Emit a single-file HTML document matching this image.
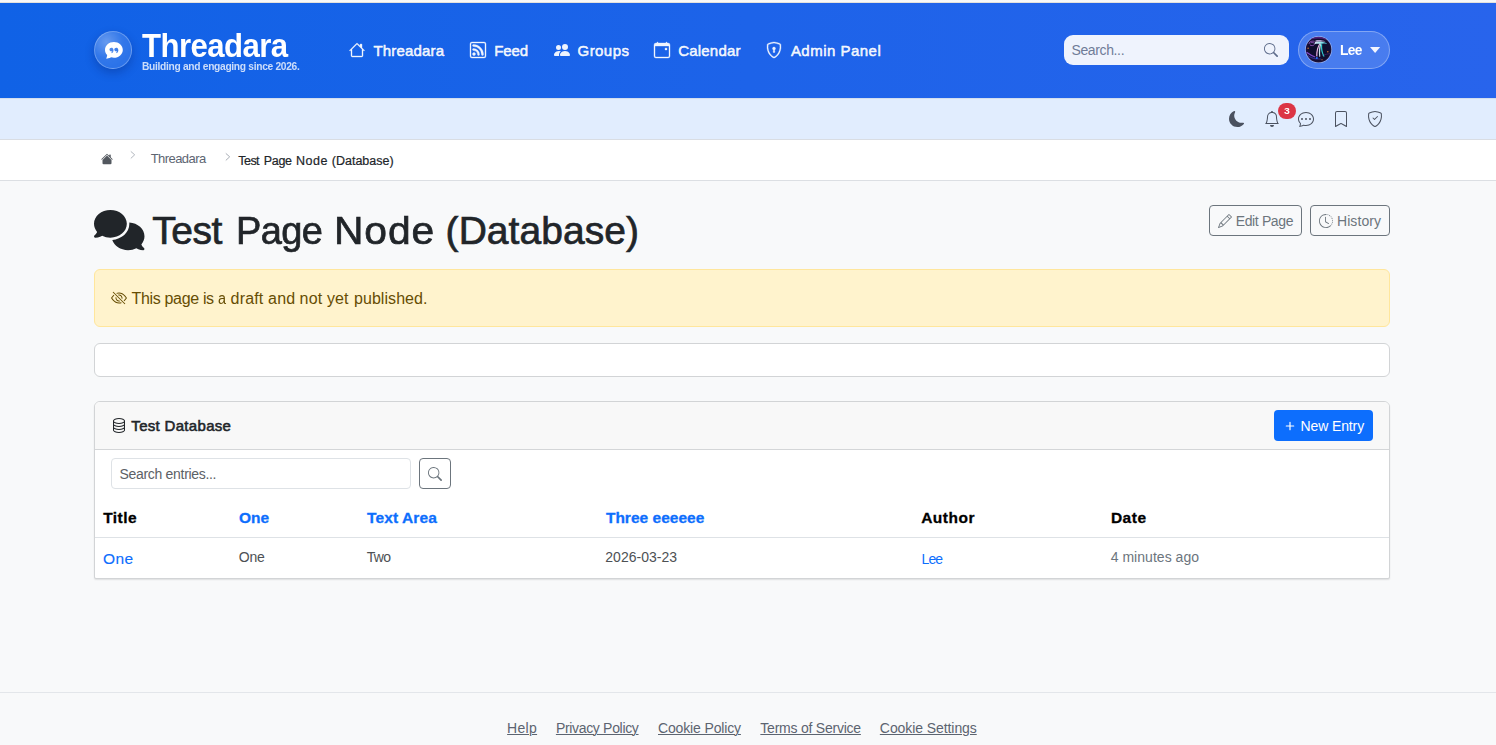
<!DOCTYPE html>
<html lang="en"><head><meta charset="utf-8"><title>Test Page Node (Database) - Threadara</title>
<style>
*{box-sizing:border-box;margin:0;padding:0}
html,body{width:1496px;height:745px;overflow:hidden}
body{position:relative;background:#f8f9fa;font-family:"Liberation Sans",sans-serif;color:#212529}
.a{position:absolute}
.t{position:absolute;white-space:pre;line-height:1;transform-origin:0 0}
.i{position:absolute;display:block;overflow:visible}
.ul{position:absolute;height:1px}
a.t{text-decoration:none}
</style></head>
<body>
<header aria-label="Site header">
<div class="a" style="left:0;top:0;width:1496px;height:3px;background:linear-gradient(180deg,#f7f7f7 0,#f9f9f9 2px,#e4e1dc 2px,#e4e1dc 3px)"></div>
<div class="a" style="left:0;top:3px;width:1496px;height:95px;background:linear-gradient(90deg,#1062e6 0%,#1d63e9 50%,#2864ec 100%)"></div>
<div class="a" style="left:94px;top:31px;width:38px;height:38px;border-radius:50%;border:1px solid rgba(255,255,255,.28);background:radial-gradient(circle at 32% 28%,rgba(255,255,255,.36) 0%,rgba(255,255,255,.14) 45%,rgba(255,255,255,.08) 100%);box-shadow:0 4px 10px rgba(0,20,90,.28)"></div>
<svg class="i" style="left:104.6px;top:41.3px;" width="17.8" height="17.8" viewBox="0 0 16 16" fill="#fff"><path d="M16 8c0 3.866-3.582 7-8 7a9 9 0 0 1-2.347-.306c-.584.296-1.925.864-4.181 1.234-.2.032-.352-.176-.273-.362.354-.836.674-1.950.77-2.966C.744 11.370 0 9.760 0 8c0-3.866 3.582-7 8-7s8 3.134 8 7M7.194 6.766a1.700 1.700 0 0 0-.227-.272 1.500 1.500 0 0 0-.469-.324l-.008-.004A1.800 1.800 0 0 0 5.734 6C4.776 6 4 6.746 4 7.667c0 .92.776 1.666 1.734 1.666.343 0 .662-.095.931-.26-.137.389-.39.804-.81 1.220a.405.405 0 0 0 .011.59c.173.16.447.155.614-.01 1.334-1.329 1.370-2.758.941-3.706a2.500 2.500 0 0 0-.227-.4zM11 9.073c-.136.389-.39.804-.81 1.220a.405.405 0 0 0 .012.59c.172.16.446.155.613-.01 1.334-1.329 1.370-2.758.942-3.706a2.500 2.500 0 0 0-.228-.4 1.700 1.700 0 0 0-.227-.273 1.500 1.500 0 0 0-.469-.324l-.008-.004A1.800 1.800 0 0 0 10.070 6c-.957 0-1.734.746-1.734 1.667 0 .92.777 1.666 1.734 1.666.343 0 .662-.095.931-.26z"/></svg>
<svg stroke="rgba(255,255,255,.93)" stroke-width=".35" class="i" style="left:349px;top:41.7px;" width="16" height="16" viewBox="0 0 16 16" fill="rgba(255,255,255,.93)"><path d="M8.707 1.5a1 1 0 0 0-1.414 0L.646 8.146a.5.5 0 0 0 .708.708L2 8.207V13.5A1.5 1.5 0 0 0 3.5 15h9a1.5 1.5 0 0 0 1.5-1.5V8.207l.646.647a.5.5 0 0 0 .708-.708L13 5.793V2.5a.5.5 0 0 0-.5-.5h-1a.5.5 0 0 0-.5.5v1.293zM13 7.207V13.5a.5.5 0 0 1-.5.5h-9a.5.5 0 0 1-.5-.5V7.207l5-5z"/></svg>
<svg stroke="rgba(255,255,255,.93)" stroke-width=".35" class="i" style="left:470px;top:42px;" width="16" height="16" viewBox="0 0 16 16" fill="rgba(255,255,255,.93)"><path d="M14 1a1 1 0 0 1 1 1v12a1 1 0 0 1-1 1H2a1 1 0 0 1-1-1V2a1 1 0 0 1 1-1zM2 0a2 2 0 0 0-2 2v12a2 2 0 0 0 2 2h12a2 2 0 0 0 2-2V2a2 2 0 0 0-2-2z"/><path d="M5.5 12a1.5 1.5 0 1 1-3 0 1.5 1.5 0 0 1 3 0m-3-8.5a1 1 0 0 1 1-1c5.523 0 10 4.477 10 10a1 1 0 1 1-2 0 8 8 0 0 0-8-8 1 1 0 0 1-1-1m0 4a1 1 0 0 1 1-1 6 6 0 0 1 6 6 1 1 0 1 1-2 0 4 4 0 0 0-4-4 1 1 0 0 1-1-1"/></svg>
<svg class="i" style="left:553.5px;top:42px;" width="16" height="16" viewBox="0 0 16 16" fill="rgba(255,255,255,.93)"><path d="M7 14s-1 0-1-1 1-4 5-4 5 3 5 4-1 1-1 1zm4-6a3 3 0 1 0 0-6 3 3 0 0 0 0 6m-5.784 6A2.24 2.24 0 0 1 5 13c0-1.355.68-2.75 1.936-3.72A6.300 6.300 0 0 0 5 9c-4 0-5 3-5 4s1 1 1 1zM4.5 8a2.5 2.5 0 1 0 0-5 2.5 2.5 0 0 0 0 5"/></svg>
<svg stroke="rgba(255,255,255,.93)" stroke-width=".35" class="i" style="left:654px;top:42px;" width="16" height="16" viewBox="0 0 16 16" fill="rgba(255,255,255,.93)"><path d="M11 6.5a.5.5 0 0 1 .5-.5h1a.5.5 0 0 1 .5.5v1a.5.5 0 0 1-.5.5h-1a.5.5 0 0 1-.5-.5z"/><path d="M3.5 0a.5.5 0 0 1 .5.5V1h8V.5a.5.5 0 0 1 1 0V1h1a2 2 0 0 1 2 2v11a2 2 0 0 1-2 2H2a2 2 0 0 1-2-2V3a2 2 0 0 1 2-2h1V.5a.5.5 0 0 1 .5-.5M1 4v10a1 1 0 0 0 1 1h12a1 1 0 0 0 1-1V4z"/></svg>
<svg stroke="rgba(255,255,255,.93)" stroke-width=".35" class="i" style="left:766.4px;top:42px;" width="16" height="16" viewBox="0 0 16 16" fill="rgba(255,255,255,.93)"><path d="M5.338 1.59a61 61 0 0 0-2.837.856.48.48 0 0 0-.328.39c-.554 4.157.726 7.190 2.253 9.188a10.700 10.700 0 0 0 2.287 2.233c.346.244.652.42.893.533q.18.085.293.118a1 1 0 0 0 .101.025 1 1 0 0 0 .1-.025q.114-.034.294-.118c.24-.113.547-.29.893-.533a10.700 10.700 0 0 0 2.287-2.233c1.527-1.997 2.807-5.031 2.253-9.188a.48.48 0 0 0-.328-.39c-.651-.213-1.750-.56-2.837-.855C9.552 1.29 8.531 1.067 8 1.067c-.53 0-1.552.223-2.662.524zM5.072.56C6.157.265 7.310 0 8 0s1.843.265 2.928.56c1.110.3 2.229.655 2.887.87a1.540 1.540 0 0 1 1.044 1.262c.596 4.477-.787 7.795-2.465 9.990a11.800 11.800 0 0 1-2.517 2.453 7 7 0 0 1-1.048.625c-.28.132-.581.24-.829.24s-.548-.108-.829-.24a7 7 0 0 1-1.048-.625 11.800 11.800 0 0 1-2.517-2.453C1.928 10.487.545 7.169 1.141 2.692A1.540 1.540 0 0 1 2.185 1.430 63 63 0 0 1 5.072.56"/><path d="M9.5 6.5a1.5 1.5 0 0 1-1 1.415l.385 1.990a.5.5 0 0 1-.491.595h-.788a.5.5 0 0 1-.49-.595l.384-1.990a1.500 1.500 0 1 1 2-1.415"/></svg>
<div class="a" style="left:1064px;top:35px;width:225px;height:30px;border-radius:9px;background:#eff3fd"></div>
<svg class="i" style="left:1264px;top:43px;" width="14" height="14" viewBox="0 0 16 16" fill="#5f6d8c"><path d="M11.742 10.344a6.500 6.500 0 1 0-1.397 1.398h-.001q.044.06.098.115l3.850 3.850a1 1 0 0 0 1.415-1.414l-3.850-3.850a1 1 0 0 0-.115-.1zM12 6.500a5.500 5.500 0 1 1-11 0 5.500 5.500 0 0 1 11 0"/></svg>
<div class="a" style="left:1298px;top:31px;width:92px;height:38px;border-radius:19px;background:rgba(255,255,255,.16);border:1px solid rgba(255,255,255,.32)"></div>
<svg class="i" style="left:1305.400px;top:36.4px" width="27.2" height="27.2" viewBox="0 0 27.2 27.2">
<defs><radialGradient id="ag" cx="52%" cy="50%" r="55%"><stop offset="0" stop-color="#0c0e2a"/><stop offset=".75" stop-color="#110d30"/><stop offset="1" stop-color="#23103f"/></radialGradient>
<linearGradient id="tg" x1="0" y1="0" x2="1" y2=".3"><stop offset="0" stop-color="#e9dcf6"/><stop offset=".5" stop-color="#a9e6ee"/><stop offset="1" stop-color="#48c8d8"/></linearGradient>
<filter id="b1" x="-40%" y="-40%" width="180%" height="180%"><feGaussianBlur stdDeviation=".6"/></filter>
<filter id="b2" x="-40%" y="-40%" width="180%" height="180%"><feGaussianBlur stdDeviation=".32"/></filter>
<clipPath id="ac"><circle cx="13.600" cy="13.600" r="12.800"/></clipPath></defs>
<circle cx="13.600" cy="13.600" r="13.500" fill="#a9c2f8" opacity=".8"/>
<circle cx="13.600" cy="13.600" r="12.800" fill="url(#ag)"/>
<g clip-path="url(#ac)">
<path d="M6 2.600C10 1.200 17 1.200 21 3" stroke="#5e2388" stroke-width="1.600" fill="none" opacity=".85" filter="url(#b1)"/>
<path d="M1.500 16.200C4 18 7 19.800 10.200 21" stroke="#9050dc" stroke-width="1.200" fill="none" opacity=".9" filter="url(#b1)"/>
<path d="M2.500 19.500C6 22 11 23.300 16 23" stroke="#3c3aa8" stroke-width="1.100" fill="none" opacity=".7" filter="url(#b1)"/>
<path d="M17 19.500C20 18.500 22.500 18 25.500 17.500" stroke="#6a3590" stroke-width=".8" fill="none" opacity=".6" filter="url(#b1)"/>
<path d="M4.300 8C3.700 6 6.500 4.700 9.600 5.300M4.900 8.900C6.500 10.100 8.600 9.700 9.600 8.400M5.600 6.900C7 6.300 8.500 6.600 9.400 7.300" stroke="#b868de" stroke-width=".8" fill="none" opacity=".95" filter="url(#b2)"/>
<path d="M10.500 4.400C13.500 3.700 17.500 4 20.500 5.600L17 5.500C14.500 5.300 12.500 5.400 10.300 5.700Z" fill="#cdb6ea" opacity=".85" filter="url(#b2)"/>
<path d="M10.200 5.900C13.500 5 18 5.300 21.800 7.200C21.900 7.600 21.500 7.800 21 7.700C18.600 7.400 16.500 7.600 15 8.100C13 7.600 11.200 7.700 9.800 8.200C9.500 7.300 9.600 6.500 10.200 5.900Z" fill="url(#tg)" filter="url(#b2)"/>
<path d="M14.200 7.800C12.500 10.800 11 15 11.200 20.200L12.400 20.600C12.200 16 13.200 11.500 15.200 8Z" fill="#eeb4e4" filter="url(#b2)"/>
<path d="M15 8.100C13.800 12 13.600 16.500 14.300 20.900L15.300 20.500C14.900 16.200 15.300 11.700 16.200 8.300Z" fill="#cfeff4" opacity=".95" filter="url(#b2)"/>
<path d="M16 8.300C15.400 12.600 16.500 17.500 18.800 20.900L19.500 20.200C17.600 16.900 16.900 12.600 17.200 8.300Z" fill="#2ec6cc" filter="url(#b2)"/>
<circle cx="3.100" cy="12.300" r=".7" fill="#f0903c" opacity=".9" filter="url(#b2)"/><circle cx="22.800" cy="15.800" r=".75" fill="#e8843c" opacity=".9" filter="url(#b2)"/><circle cx="17" cy="23.700" r=".6" fill="#d88840" opacity=".85" filter="url(#b2)"/>
<circle cx="11.800" cy="22" r="1" fill="#2a6cff" filter="url(#b1)"/>
</g></svg>
<svg class="i" style="left:1370.3px;top:47.2px" width="10.2" height="6" viewBox="0 0 10.2 6"><path d="M0 0h10.200L5.100 6z" fill="#f4f6ff"/></svg>
<span class="t" style="left:141.97px;top:29px;font-size:33.5px;color:#fff;font-weight:700;letter-spacing:-0.613px;transform:scaleX(0.9300);">Threadara</span>
<span class="t" style="left:141.73px;top:61px;font-size:11.0px;color:rgba(255,255,255,.78);font-weight:700;letter-spacing:-0.333px;transform:scaleX(0.9300);">Building and engaging since 2026.</span>
<a class="t" href="#" style="left:373.52px;top:43px;font-size:15.0px;color:rgba(255,255,255,.92);letter-spacing:0.169px;-webkit-text-stroke:0.55px rgba(255,255,255,.92);">Threadara</a>
<a class="t" href="#" style="left:494.27px;top:43px;font-size:15.0px;color:rgba(255,255,255,.92);letter-spacing:-0.100px;-webkit-text-stroke:0.55px rgba(255,255,255,.92);">Feed</a>
<a class="t" href="#" style="left:577.62px;top:43px;font-size:15.0px;color:rgba(255,255,255,.92);letter-spacing:0.420px;-webkit-text-stroke:0.55px rgba(255,255,255,.92);">Groups</a>
<a class="t" href="#" style="left:678.27px;top:43px;font-size:15.0px;color:rgba(255,255,255,.92);letter-spacing:0.186px;-webkit-text-stroke:0.55px rgba(255,255,255,.92);">Calendar</a>
<a class="t" href="#" style="left:790.88px;top:43px;font-size:15.0px;color:rgba(255,255,255,.92);letter-spacing:0.485px;-webkit-text-stroke:0.55px rgba(255,255,255,.92);">Admin Panel</a>
<span class="t" style="left:1071.50px;top:43px;font-size:14.0px;color:#6f7c98;letter-spacing:-0.375px;">Search...</span>
<a class="t" href="#" style="left:1339.69px;top:43px;font-size:14.5px;color:#fff;font-weight:700;letter-spacing:-0.717px;transform:scaleX(0.9500);">Lee</a>
</header>
<section aria-label="User toolbar">
<div class="a" style="left:0;top:98px;width:1496px;height:41px;background:#e1edfe"></div>
<div class="a" style="left:0;top:98px;width:1496px;height:1px;background:#d3deee"></div>
<div class="a" style="left:0;top:139px;width:1496px;height:1px;background:#d9dde3"></div>
<svg class="i" style="left:1229px;top:111px;" width="16" height="16" viewBox="0 0 16 16" fill="#4b5260"><path d="M6 .278a.77.77 0 0 1 .08.858 7.200 7.200 0 0 0-.878 3.460c0 4.021 3.278 7.277 7.318 7.277q.792-.001 1.533-.16a.79.79 0 0 1 .81.316.73.73 0 0 1-.031.893A8.350 8.350 0 0 1 8.344 16C3.734 16 0 12.286 0 7.710 0 4.266 2.114 1.312 5.124.06A.75.75 0 0 1 6 .278"/></svg>
<svg class="i" style="left:1263.5px;top:111px;" width="16" height="16" viewBox="0 0 16 16" fill="#4b5260"><path d="M8 16a2 2 0 0 0 2-2H6a2 2 0 0 0 2 2M8 1.918l-.797.161A4 4 0 0 0 4 6c0 .628-.134 2.197-.459 3.742-.16.767-.376 1.566-.663 2.258h10.244c-.287-.692-.502-1.490-.663-2.258C12.134 8.197 12 6.628 12 6a4 4 0 0 0-3.203-3.920zM14.220 12c.223.447.481.801.78 1H1c.299-.199.557-.553.78-1C2.680 10.200 3 6.880 3 6c0-2.420 1.720-4.440 4.005-4.901a1 1 0 1 1 1.990 0A5 5 0 0 1 13 6c0 .880.320 4.200 1.220 6"/></svg>
<svg class="i" style="left:1298px;top:111px;" width="16" height="16" viewBox="0 0 16 16" fill="#4b5260"><path d="M5 8a1 1 0 1 1-2 0 1 1 0 0 1 2 0m4 0a1 1 0 1 1-2 0 1 1 0 0 1 2 0m3 1a1 1 0 1 0 0-2 1 1 0 0 0 0 2"/><path d="m2.165 15.803.02-.004c1.830-.363 2.948-.842 3.468-1.105A9 9 0 0 0 8 15c4.418 0 8-3.134 8-7s-3.582-7-8-7-8 3.134-8 7c0 1.760.743 3.370 1.970 4.600a10.400 10.400 0 0 1-.524 2.318l-.003.011a11 11 0 0 1-.244.637c-.079.186.074.394.273.362a22 22 0 0 0 .693-.125m.8-3.108a1 1 0 0 0-.287-.801C1.618 10.830 1 9.468 1 8c0-3.192 3.004-6 7-6s7 2.808 7 6-3.004 6-7 6a8 8 0 0 1-2.088-.272 1 1 0 0 0-.711.074c-.387.196-1.240.57-2.634.893a11 11 0 0 0 .398-2"/></svg>
<svg class="i" style="left:1332.5px;top:111px;" width="16" height="16" viewBox="0 0 16 16" fill="#4b5260"><path d="M2 2a2 2 0 0 1 2-2h8a2 2 0 0 1 2 2v13.500a.5.5 0 0 1-.777.416L8 13.101l-5.223 2.815A.5.5 0 0 1 2 15.500zm2-1a1 1 0 0 0-1 1v12.566l4.723-2.482a.5.5 0 0 1 .554 0L13 14.566V2a1 1 0 0 0-1-1z"/></svg>
<svg class="i" style="left:1367px;top:111px;" width="16" height="16" viewBox="0 0 16 16" fill="#4b5260"><path d="M5.338 1.59a61 61 0 0 0-2.837.856.48.48 0 0 0-.328.39c-.554 4.157.726 7.190 2.253 9.188a10.700 10.700 0 0 0 2.287 2.233c.346.244.652.42.893.533q.18.085.293.118a1 1 0 0 0 .101.025 1 1 0 0 0 .1-.025q.114-.034.294-.118c.24-.113.547-.29.893-.533a10.700 10.700 0 0 0 2.287-2.233c1.527-1.997 2.807-5.031 2.253-9.188a.48.48 0 0 0-.328-.39c-.651-.213-1.750-.56-2.837-.855C9.552 1.29 8.531 1.067 8 1.067c-.53 0-1.552.223-2.662.524zM5.072.56C6.157.265 7.310 0 8 0s1.843.265 2.928.56c1.110.3 2.229.655 2.887.87a1.540 1.540 0 0 1 1.044 1.262c.596 4.477-.787 7.795-2.465 9.990a11.800 11.800 0 0 1-2.517 2.453 7 7 0 0 1-1.048.625c-.28.132-.581.24-.829.24s-.548-.108-.829-.24a7 7 0 0 1-1.048-.625 11.800 11.800 0 0 1-2.517-2.453C1.928 10.487.545 7.169 1.141 2.692A1.540 1.540 0 0 1 2.185 1.430 63 63 0 0 1 5.072.56"/><path d="M10.854 5.146a.5.5 0 0 1 0 .708l-3 3a.5.5 0 0 1-.708 0l-1.500-1.500a.5.5 0 1 1 .708-.708L7.500 7.793l2.646-2.647a.5.5 0 0 1 .708 0"/></svg>
<div class="a" style="left:1278.3px;top:102.6px;width:17.6px;height:16.6px;border-radius:9px;background:#dc3545"></div>
<span class="t" style="left:1283.54px;top:106px;font-size:9.5px;color:#fff;font-weight:700;transform:scaleX(1.1000);">3</span>
</section>
<nav aria-label="Breadcrumb">
<div class="a" style="left:0;top:140px;width:1496px;height:40px;background:#fff"></div>
<div class="a" style="left:0;top:180px;width:1496px;height:1px;background:#dcdfe3"></div>
<svg class="i" style="left:101.0px;top:152.5px;" width="12" height="12" viewBox="0 0 16 16" fill="#53585f"><path d="M8.707 1.5a1 1 0 0 0-1.414 0L.646 8.146a.5.5 0 0 0 .708.708L8 2.207l6.646 6.647a.5.5 0 0 0 .708-.708L13 5.793V2.5a.5.5 0 0 0-.5-.5h-1a.5.5 0 0 0-.5.5v1.293z"/><path d="m8 3.293 6 6V13.5a1.5 1.5 0 0 1-1.5 1.500h-9A1.500 1.500 0 0 1 2 13.500V9.293z"/></svg>
<svg class="i" style="left:130px;top:150.6px" width="6" height="8" viewBox="0 0 6 8"><path d="M0.800 0.400L4.700 3.800L0.800 7.400" fill="none" stroke="#b3b8bf" stroke-width="1"/></svg>
<svg class="i" style="left:224.800px;top:152.7px" width="6" height="8" viewBox="0 0 6 8"><path d="M0.800 0.400L4.700 3.800L0.800 7.400" fill="none" stroke="#a9aeb6" stroke-width="1"/></svg>
<a class="t" href="#" style="left:150.65px;top:152px;font-size:13.0px;color:#5d6572;letter-spacing:-0.550px;">Threadara</a>
<span class="t" style="left:238.35px;top:155px;font-size:12.5px;color:#212529;letter-spacing:-0.567px;-webkit-text-stroke:0.2px #212529;">Test</span>
<span class="t" style="left:263.85px;top:155px;font-size:12.5px;color:#212529;letter-spacing:-0.367px;-webkit-text-stroke:0.2px #212529;">Page</span>
<span class="t" style="left:296.00px;top:155px;font-size:12.5px;color:#212529;letter-spacing:0.550px;-webkit-text-stroke:0.2px #212529;">Node</span>
<span class="t" style="left:331.85px;top:155px;font-size:12.5px;color:#212529;letter-spacing:-0.011px;-webkit-text-stroke:0.2px #212529;">(Database)</span>
</nav>
<main aria-label="Page content">
<svg class="i" style="left:94px;top:210px" width="50.5" height="40.2" viewBox="0 0 640 512" preserveAspectRatio="none" fill="#212529"><path d="M208 352c114.900 0 208-78.800 208-176S322.900 0 208 0S0 78.800 0 176c0 38.600 14.700 74.300 39.600 103.400c-3.500 9.400-8.700 17.700-14.200 24.700c-4.800 6.200-9.700 11-13.300 14.300c-1.800 1.600-3.300 2.900-4.300 3.700c-.5 .4-.9 .7-1.100 .8l-.2 .2 0 0 0 0C1 327.200-1.400 334.400 .8 340.900S9.100 352 16 352c21.800 0 43.800-5.600 62.100-12.500c9.200-3.500 17.800-7.400 25.300-11.400C134.100 343.300 169.800 352 208 352zM448 176c0 112.300-99.100 196.900-216.500 207C255.800 457.400 336.400 512 432 512c38.200 0 73.900-8.700 104.700-23.900c7.500 4 16 7.900 25.200 11.400c18.300 6.900 40.300 12.500 62.100 12.500c6.900 0 13.100-4.500 15.200-11.100c2.100-6.600-.2-13.800-5.800-17.900l0 0 0 0-.2-.2c-.2-.2-.6-.4-1.100-.8c-1-.8-2.500-2-4.300-3.700c-3.600-3.300-8.500-8.100-13.300-14.300c-5.500-7-10.700-15.400-14.200-24.700c24.900-29 39.600-64.700 39.600-103.400c0-92.800-84.900-168.900-192.600-175.500c.4 5.100 .6 10.300 .6 15.500z"/></svg>
<div class="a" style="left:1209px;top:205px;width:93px;height:31px;border:1px solid #6c757d;border-radius:4px"></div>
<div class="a" style="left:1310px;top:205px;width:80px;height:31px;border:1px solid #6c757d;border-radius:4px"></div>
<svg class="i" style="left:1218px;top:214px;" width="14" height="14" viewBox="0 0 16 16" fill="#6c757d"><path d="M12.146.146a.5.5 0 0 1 .708 0l3 3a.5.5 0 0 1 0 .708l-10 10a.5.5 0 0 1-.168.110l-5 2a.5.5 0 0 1-.65-.65l2-5a.5.5 0 0 1 .11-.168zM11.207 2.500 13.500 4.793 14.793 3.500 12.500 1.207zm1.586 3L10.500 3.207 4 9.707V10h.5a.5.5 0 0 1 .5.5v.5h.5a.5.5 0 0 1 .5.5v.5h.293zm-9.761 5.175-.106.106-1.528 3.821 3.821-1.528.106-.106A.5.5 0 0 1 5 12.500V12h-.5a.5.5 0 0 1-.5-.5V11h-.5a.5.5 0 0 1-.468-.325"/></svg>
<svg class="i" style="left:1319px;top:214px;" width="14" height="14" viewBox="0 0 16 16" fill="#6c757d"><path d="M8.515 1.019A7 7 0 0 0 8 1V0a8 8 0 0 1 .589.022zm2.004.45a7 7 0 0 0-.985-.299l.219-.976q.576.129 1.126.342zm1.370.71a7 7 0 0 0-.439-.27l.493-.87a8 8 0 0 1 .979.654l-.615.789a7 7 0 0 0-.418-.302zm1.834 1.790a7 7 0 0 0-.653-.796l.724-.69q.406.429.747.910zm.744 1.352a7 7 0 0 0-.214-.468l.893-.45a8 8 0 0 1 .45 1.088l-.95.313a7 7 0 0 0-.179-.483m.53 2.507a7 7 0 0 0-.1-1.025l.985-.17q.1.58.116 1.170zm-.131 1.538q.05-.254.081-.51l.993.123a8 8 0 0 1-.23 1.155l-.964-.267q.069-.247.12-.501m-.952 2.379q.276-.436.486-.908l.914.405q-.24.54-.555 1.038zm-.964 1.205q.183-.183.35-.378l.758.653a8 8 0 0 1-.401.432z"/><path d="M8 1a7 7 0 1 0 4.950 11.950l.707.707A8.001 8.001 0 1 1 8 0z"/><path d="M7.500 3a.5.5 0 0 1 .5.5v5.210l3.248 1.856a.5.5 0 0 1-.496.868l-3.500-2A.5.5 0 0 1 7 9V3.500a.5.5 0 0 1 .5-.5"/></svg>
<div class="a" style="left:94px;top:269px;width:1296px;height:58px;background:#fff3cd;border:1px solid #ffe69c;border-radius:6px"></div>
<svg class="i" style="left:111px;top:290px;" width="16" height="16" viewBox="0 0 16 16" fill="#664d03"><path d="M13.359 11.238C15.060 9.720 16 8 16 8s-3-5.500-8-5.500a7 7 0 0 0-2.790.588l.77.771A6 6 0 0 1 8 3.500c2.120 0 3.879 1.168 5.168 2.457A13 13 0 0 1 14.828 8q-.086.130-.195.288c-.335.48-.83 1.120-1.465 1.755q-.247.248-.517.486z"/><path d="M11.297 9.176a3.500 3.500 0 0 0-4.474-4.474l.823.823a2.500 2.500 0 0 1 2.829 2.829zm-2.943 1.299.822.822a3.500 3.500 0 0 1-4.474-4.474l.823.823a2.500 2.500 0 0 0 2.829 2.829"/><path d="M3.350 5.470q-.27.240-.518.487A13 13 0 0 0 1.172 8l.195.288c.335.48.83 1.120 1.465 1.755C4.121 11.332 5.881 12.500 8 12.500c.716 0 1.390-.133 2.020-.36l.77.772A7 7 0 0 1 8 13.500C3 13.500 0 8 0 8s.939-1.721 2.641-3.238l.708.709zm10.296 8.884-12-12 .708-.708 12 12z"/></svg>
<div class="a" style="left:94px;top:343px;width:1296px;height:34px;background:#fff;border:1px solid #d2d4d6;border-radius:6px"></div>
<div class="a" style="left:94px;top:401px;width:1296px;height:178px;background:#fff;border:1px solid #d2d4d6;border-radius:6px 6px 2px 2px;box-shadow:0 1px 1.5px rgba(0,0,0,.10);overflow:hidden"><div class="a" style="left:0;top:0;width:1294px;height:48px;background:#f8f8f8;border-bottom:1px solid #d4d6d8"></div><div class="a" style="left:0;top:135px;width:1294px;height:1px;background:#dee2e6"></div></div>
<svg class="i" style="left:111px;top:417px;" width="16" height="16" viewBox="0 0 16 16" fill="#212529"><path d="M4.318 2.687C5.234 2.271 6.536 2 8 2s2.766.27 3.682.687C12.644 3.125 13 3.627 13 4c0 .374-.356.875-1.318 1.313C10.766 5.729 9.464 6 8 6s-2.766-.27-3.682-.687C3.356 4.875 3 4.373 3 4c0-.374.356-.875 1.318-1.313M13 5.698V7c0 .374-.356.875-1.318 1.313C10.766 8.729 9.464 9 8 9s-2.766-.27-3.682-.687C3.356 7.875 3 7.373 3 7V5.698c.271.202.58.378.904.525C4.978 6.711 6.427 7 8 7s3.022-.289 4.096-.777A5 5 0 0 0 13 5.698M14 4c0-1.007-.875-1.755-1.904-2.223C11.022 1.289 9.573 1 8 1s-3.022.289-4.096.777C2.875 2.245 2 2.993 2 4v9c0 1.007.875 1.755 1.904 2.223C4.978 15.710 6.427 16 8 16s3.022-.289 4.096-.777C13.125 14.755 14 14.007 14 13zm-1 4.698V10c0 .374-.356.875-1.318 1.313C10.766 11.729 9.464 12 8 12s-2.766-.27-3.682-.687C3.356 10.875 3 10.373 3 10V8.698c.271.202.58.378.904.525C4.978 9.710 6.427 10 8 10s3.022-.289 4.096-.777A5 5 0 0 0 13 8.698m0 3V13c0 .374-.356.875-1.318 1.313C10.766 14.729 9.464 15 8 15s-2.766-.27-3.682-.687C3.356 13.875 3 13.373 3 13v-1.302c.271.202.58.378.904.525C4.978 12.710 6.427 13 8 13s3.022-.289 4.096-.777c.324-.147.633-.323.904-.525"/></svg>
<div class="a" style="left:1274px;top:410px;width:99px;height:31px;background:#0d6efd;border-radius:4px"></div>
<svg class="i" style="left:1286px;top:422px" width="8" height="8" viewBox="0 0 8 8"><path d="M4 0.300V7.700M0.300 4H7.700" stroke="#fff" stroke-width="1.200" stroke-linecap="round"/></svg>
<div class="a" style="left:111px;top:458px;width:300px;height:31px;background:#fff;border:1px solid #dee2e6;border-radius:4px"></div>
<div class="a" style="left:419px;top:458px;width:32px;height:31px;border:1px solid #6c757d;border-radius:4px"></div>
<svg class="i" style="left:428px;top:467px;" width="14" height="14" viewBox="0 0 16 16" fill="#6c757d"><path d="M11.742 10.344a6.500 6.500 0 1 0-1.397 1.398h-.001q.044.06.098.115l3.850 3.850a1 1 0 0 0 1.415-1.414l-3.850-3.850a1 1 0 0 0-.115-.1zM12 6.500a5.500 5.500 0 1 1-11 0 5.500 5.500 0 0 1 11 0"/></svg>
<span class="t" style="left:152.35px;top:211px;font-size:39.0px;color:#212529;letter-spacing:-0.483px;-webkit-text-stroke:0.7px #212529;">Test</span>
<span class="t" style="left:235.52px;top:211px;font-size:39.0px;color:#212529;letter-spacing:-0.645px;transform:scaleX(0.9750);-webkit-text-stroke:0.7px #212529;">Page</span>
<span class="t" style="left:333.72px;top:211px;font-size:39.0px;color:#212529;letter-spacing:0.867px;transform:scaleX(1.0450);-webkit-text-stroke:0.7px #212529;">Node</span>
<span class="t" style="left:445.60px;top:211px;font-size:39.0px;color:#212529;letter-spacing:0.050px;-webkit-text-stroke:0.7px #212529;">(Database)</span>
<a class="t" href="#" style="left:1235.75px;top:214px;font-size:14.0px;color:#6c757d;letter-spacing:-0.375px;">Edit Page</a>
<a class="t" href="#" style="left:1337.00px;top:214px;font-size:14.0px;color:#6c757d;letter-spacing:0.067px;">History</a>
<span class="t" style="left:131.50px;top:291px;font-size:16.0px;color:#664d03;letter-spacing:-0.331px;">This page</span>
<span class="t" style="left:203.00px;top:291px;font-size:16.0px;color:#664d03;letter-spacing:-0.600px;">is</span>
<span class="t" style="left:218.05px;top:291px;font-size:16.0px;color:#664d03;transform:scaleX(0.9000);">a</span>
<span class="t" style="left:230.60px;top:291px;font-size:16.0px;color:#664d03;letter-spacing:0.175px;">draft and</span>
<span class="t" style="left:299.60px;top:291px;font-size:16.0px;color:#664d03;letter-spacing:0.150px;">not yet</span>
<span class="t" style="left:354.00px;top:291px;font-size:16.0px;color:#664d03;letter-spacing:0.056px;">published.</span>
<span class="t" style="left:131.33px;top:418px;font-size:15.0px;color:#212529;letter-spacing:0.312px;-webkit-text-stroke:0.55px #212529;">Test Database</span>
<a class="t" href="#" style="left:1300.60px;top:419px;font-size:14.0px;color:#fff;letter-spacing:-0.130px;">New Entry</a>
<span class="t" style="left:119.55px;top:467px;font-size:14.0px;color:#5c6166;letter-spacing:-0.312px;">Search entries...</span>
<span class="t" style="left:103.15px;top:510px;font-size:15.5px;color:#000;font-weight:700;letter-spacing:0.487px;-webkit-text-stroke:0.3px #000;">Title</span>
<a class="t" href="#" style="left:238.90px;top:510px;font-size:15.5px;color:#0d6efd;font-weight:700;letter-spacing:0.100px;-webkit-text-stroke:0.3px #0d6efd;">One</a>
<a class="t" href="#" style="left:367.05px;top:510px;font-size:15.5px;color:#0d6efd;font-weight:700;letter-spacing:0.100px;-webkit-text-stroke:0.3px #0d6efd;">Text Area</a>
<a class="t" href="#" style="left:605.90px;top:510px;font-size:15.5px;color:#0d6efd;font-weight:700;letter-spacing:0.018px;-webkit-text-stroke:0.3px #0d6efd;">Three eeeeee</a>
<span class="t" style="left:921.15px;top:510px;font-size:15.5px;color:#000;font-weight:700;letter-spacing:0.510px;-webkit-text-stroke:0.3px #000;">Author</span>
<span class="t" style="left:1110.90px;top:510px;font-size:15.5px;color:#000;font-weight:700;letter-spacing:0.533px;-webkit-text-stroke:0.3px #000;">Date</span>
<a class="t" href="#" style="left:103.08px;top:551px;font-size:15.5px;color:#0d6efd;letter-spacing:0.425px;-webkit-text-stroke:0.15px #0d6efd;">One</a>
<span class="t" style="left:238.75px;top:550px;font-size:14.0px;color:#4d5154;letter-spacing:-0.250px;">One</span>
<span class="t" style="left:366.65px;top:550px;font-size:14.0px;color:#4d5154;letter-spacing:-0.650px;">Two</span>
<span class="t" style="left:605.25px;top:550px;font-size:14.0px;color:#4d5154;letter-spacing:0.028px;">2026-03-23</span>
<a class="t" href="#" style="left:921.50px;top:552px;font-size:14.0px;color:#0d6efd;letter-spacing:-0.875px;">Lee</a>
<span class="t" style="left:1110.65px;top:550px;font-size:14.0px;color:#6c757d;letter-spacing:0.037px;">4 minutes ago</span>
</main>
<footer aria-label="Footer links">
<div class="a" style="left:0;top:692px;width:1496px;height:1px;background:#e3e6ea"></div>
<a class="t" href="#" style="left:507.10px;top:721px;font-size:14.0px;color:#5c6470;letter-spacing:0.300px;text-decoration:underline;text-decoration-thickness:1px;text-underline-offset:0.6px;">Help</a>
<a class="t" href="#" style="left:555.90px;top:721px;font-size:14.0px;color:#5c6470;letter-spacing:-0.319px;text-decoration:underline;text-decoration-thickness:1px;text-underline-offset:0.6px;">Privacy Policy</a>
<a class="t" href="#" style="left:658.00px;top:721px;font-size:14.0px;color:#5c6470;letter-spacing:-0.146px;text-decoration:underline;text-decoration-thickness:1px;text-underline-offset:0.6px;">Cookie Policy</a>
<a class="t" href="#" style="left:760.35px;top:721px;font-size:14.0px;color:#5c6470;letter-spacing:-0.233px;text-decoration:underline;text-decoration-thickness:1px;text-underline-offset:0.6px;">Terms of Service</a>
<a class="t" href="#" style="left:879.85px;top:721px;font-size:14.0px;color:#5c6470;letter-spacing:-0.079px;text-decoration:underline;text-decoration-thickness:1px;text-underline-offset:0.6px;">Cookie Settings</a>
</footer>
</body></html>
